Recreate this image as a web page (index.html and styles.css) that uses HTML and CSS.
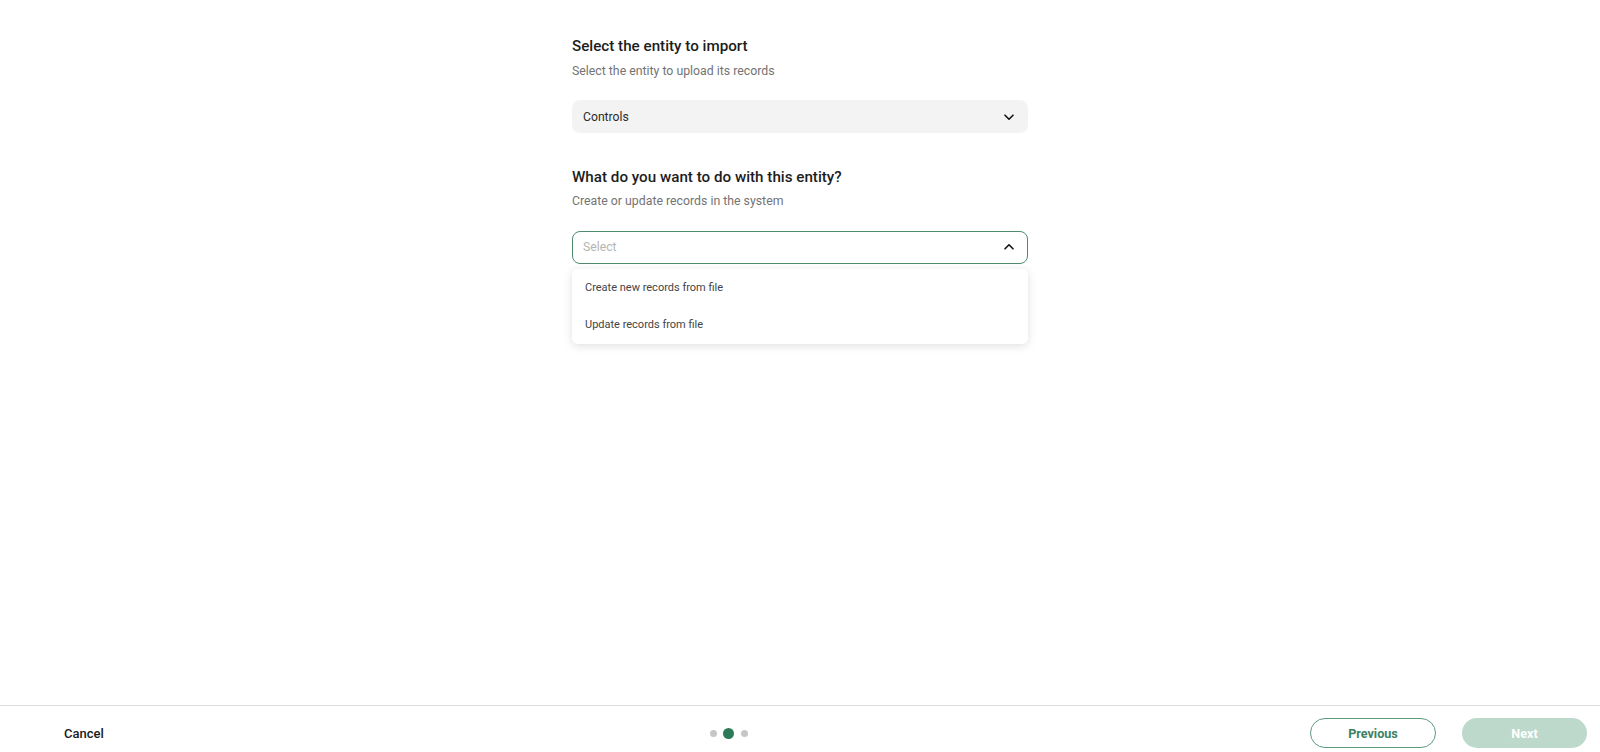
FILE: index.html
```html
<!DOCTYPE html>
<html lang="en">
  <head>
    <meta charset="UTF-8" />
    <meta name="viewport" content="width=device-width, initial-scale=1.0" />
    <title>Import</title>
    <link rel="stylesheet" href="styles.css">
  </head>
  <body>
    <main class="page">
      <div class="form">
        <section class="field">
          <h2 class="field-title">Select the entity to import</h2>
          <p class="field-hint">Select the entity to upload its records</p>
          <div class="select select-filled">
            <span class="select-value">Controls</span>
            <svg class="chevron" width="12" height="12" viewBox="0 0 12 12"><path d="M2 4.2 6 8.2l4-4" fill="none" stroke="#111" stroke-width="1.6" stroke-linecap="round" stroke-linejoin="round"/></svg>
          </div>
        </section>

        <section class="field field-second">
          <h2 class="field-title">What do you want to do with this entity?</h2>
          <p class="field-hint">Create or update records in the system</p>
          <div class="select-wrap">
            <div class="select select-open">
              <span class="select-placeholder">Select</span>
              <svg class="chevron" width="12" height="12" viewBox="0 0 12 12"><path d="M2 7.8 6 3.8l4 4" fill="none" stroke="#111" stroke-width="1.6" stroke-linecap="round" stroke-linejoin="round"/></svg>
            </div>
            <ul class="menu">
              <li class="menu-item">Create new records from file</li>
              <li class="menu-item">Update records from file</li>
            </ul>
          </div>
        </section>
      </div>
    </main>

    <footer class="footer">
      <button class="btn-cancel">Cancel</button>
      <div class="steps">
        <span class="dot"></span>
        <span class="dot dot-active"></span>
        <span class="dot"></span>
      </div>
      <div class="actions">
        <button class="btn btn-outline">Previous</button>
        <button class="btn btn-primary" disabled>Next</button>
      </div>
    </footer>
  </body>
</html>
```

FILE: styles.css
```css
* {
  margin: 0;
  padding: 0;
  box-sizing: border-box;
}

body {
  display: flex;
  flex-direction: column;
  height: 100vh;
  font-family: Roboto, "Liberation Sans", Arial, sans-serif;
  color: #1a1a1a;
  background: #fff;
}

.page {
  flex: 1;
}

.form {
  width: 456px;
  margin: 0 auto;
  padding-top: 36px;
}

.field-second {
  margin-top: 33.5px;
}

.field-title {
  font-size: 15.2px;
  font-weight: 500;
  line-height: 20px;
  color: #1d1d1d;
}

.field-hint {
  margin-top: 5.5px;
  font-size: 12.3px;
  line-height: 18px;
  color: #737373;
}

.select {
  display: flex;
  align-items: center;
  justify-content: space-between;
  height: 33px;
  margin-top: 20.5px;
  padding: 0 13px 0 11px;
  border-radius: 8px;
  font-size: 12.2px;
}

.select-filled {
  background: #f3f3f3;
}

.select-value {
  color: #2b2b2b;
}

.select-open {
  border: 1px solid #4f8a6f;
  padding-left: 10px;
  padding-right: 12px;
}

.select-placeholder {
  color: #b5b5b5;
}

.select-wrap {
  position: relative;
}

.menu {
  position: absolute;
  top: 38px;
  left: 0;
  right: 0;
  padding-bottom: 1px;
  list-style: none;
  background: #fff;
  border-radius: 6px;
  box-shadow: 0 2px 10px rgba(0, 0, 0, 0.13);
}

.menu-item {
  height: 37px;
  padding: 0 13px;
  display: flex;
  align-items: center;
  font-size: 11px;
  color: #444;
}

.footer {
  display: flex;
  align-items: flex-start;
  justify-content: space-between;
  height: 47px;
  padding: 12px 13px 0 64px;
  border-top: 1px solid #dedede;
}

.btn-cancel {
  width: 83px;
  height: 30px;
  text-align: left;
  border: none;
  background: none;
  font-family: inherit;
  font-size: 13px;
  font-weight: 500;
  color: #1a1a1a;
}

.steps {
  display: flex;
  align-items: center;
  gap: 6.5px;
  height: 30px;
}

.dot {
  width: 7px;
  height: 7px;
  border-radius: 50%;
  background: #c6c6c6;
}

.dot-active {
  width: 11px;
  height: 11px;
  background: #2c7a57;
}

.actions {
  display: flex;
  gap: 26px;
}

.btn {
  width: 126px;
  height: 30px;
  border-radius: 15px;
  font-family: inherit;
  font-size: 12.6px;
  font-weight: 700;
}

.btn-outline {
  background: #fff;
  border: 1px solid #5d9a7d;
  color: #3c8163;
}

.btn-primary {
  width: 125px;
  background: #bcd9cb;
  border: none;
  color: #fff;
}
```
